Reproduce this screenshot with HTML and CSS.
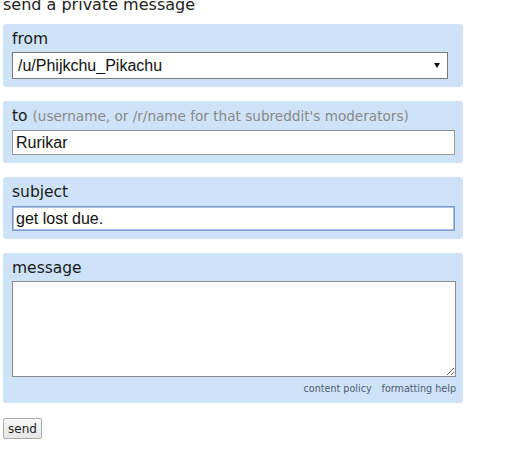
FILE: index.html
```html
<!DOCTYPE html>
<html>
<head>
<meta charset="utf-8">
<link rel="stylesheet" href="styles.css">
</head>
<body>
<div class="page">
  <h1 class="title">send a private message</h1>
  <form class="compose">
    <div class="field">
      <div class="label">from</div>
      <div class="select-wrap">
        <select class="select"><option>/u/Phijkchu_Pikachu</option></select>
      </div>
    </div>
    <div class="field">
      <div class="label">to <span class="hint">(username, or /r/name for that subreddit's moderators)</span></div>
      <input class="text" type="text" value="Rurikar">
    </div>
    <div class="field">
      <div class="label">subject</div>
      <input class="text focused" type="text" value="get lost due.">
    </div>
    <div class="field">
      <div class="label">message</div>
      <textarea class="area"></textarea>
      <div class="links"><a href="#">content policy</a><a href="#">formatting help</a></div>
    </div>
  </form>
  <button class="send" type="button">send</button>
</div>
</body>
</html>
```
FILE: styles.css
```css
html, body { margin: 0; padding: 0; background: #fff; }
body { font-family: "DejaVu Sans", Verdana, sans-serif; color: #222; }
.page { padding: 0 3px; }
.title { font-size: 16px; font-weight: normal; line-height: 16px; margin: -3px 0 0; color: #222; }
.compose { display: flex; flex-direction: column; gap: 14px; margin-top: 11px; width: 460px; }
.field { background: #cee3f8; border-radius: 3px; padding: 6px 9px 8px; display: flex; flex-direction: column; }
.label { font-size: 15.5px; line-height: 18px; margin-bottom: 5px; color: #1a1a1a; }
.hint { font-size: 13.6px; color: #888; }
.select-wrap { position: relative; width: 436px; margin-top: -1px; }
.select { appearance: none; -webkit-appearance: none; width: 436px; height: 27px; box-sizing: border-box; border: 1px solid #7a7a7a; border-radius: 0; background: #fff; font-family: "Liberation Sans", Arial, sans-serif; font-size: 16px; color: #111; padding: 0 5px; margin: 0; }
.select-wrap::after { content: ""; position: absolute; right: 8px; top: 11px; border-left: 3px solid transparent; border-right: 3px solid transparent; border-top: 5px solid #111; pointer-events: none; }
.text { width: 443px; height: 25px; box-sizing: border-box; border: 1px solid #999; border-top-color: #8a8a8a; background: #fff; font-family: "Liberation Sans", Arial, sans-serif; font-size: 16px; color: #111; padding: 0 3px; margin: 0; outline: none; }
.text.focused { border-color: #7b9bd1; box-shadow: inset 0 0 0 1px #a8bfe6; }
.area { display: block; width: 444px; height: 96px; box-sizing: border-box; border: 1px solid #8c8c8c; background: #fff; margin: -1px 0 0; padding: 2px; font-family: "Liberation Sans", Arial, sans-serif; font-size: 14px; }
.links { display: flex; justify-content: flex-end; gap: 10px; width: 444px; font-size: 9.6px; line-height: 16px; margin-top: 4px; margin-bottom: -2px; }
.links a { color: #4f5b73; text-decoration: none; }
.send { margin-top: 15px; height: 21px; width: 39px; padding: 0; font-family: "DejaVu Sans", Verdana, sans-serif; font-size: 12px; color: #222; background: linear-gradient(#f8f8f8, #e6e6e6); border: 1px solid #aaa; border-radius: 2px; }
```
